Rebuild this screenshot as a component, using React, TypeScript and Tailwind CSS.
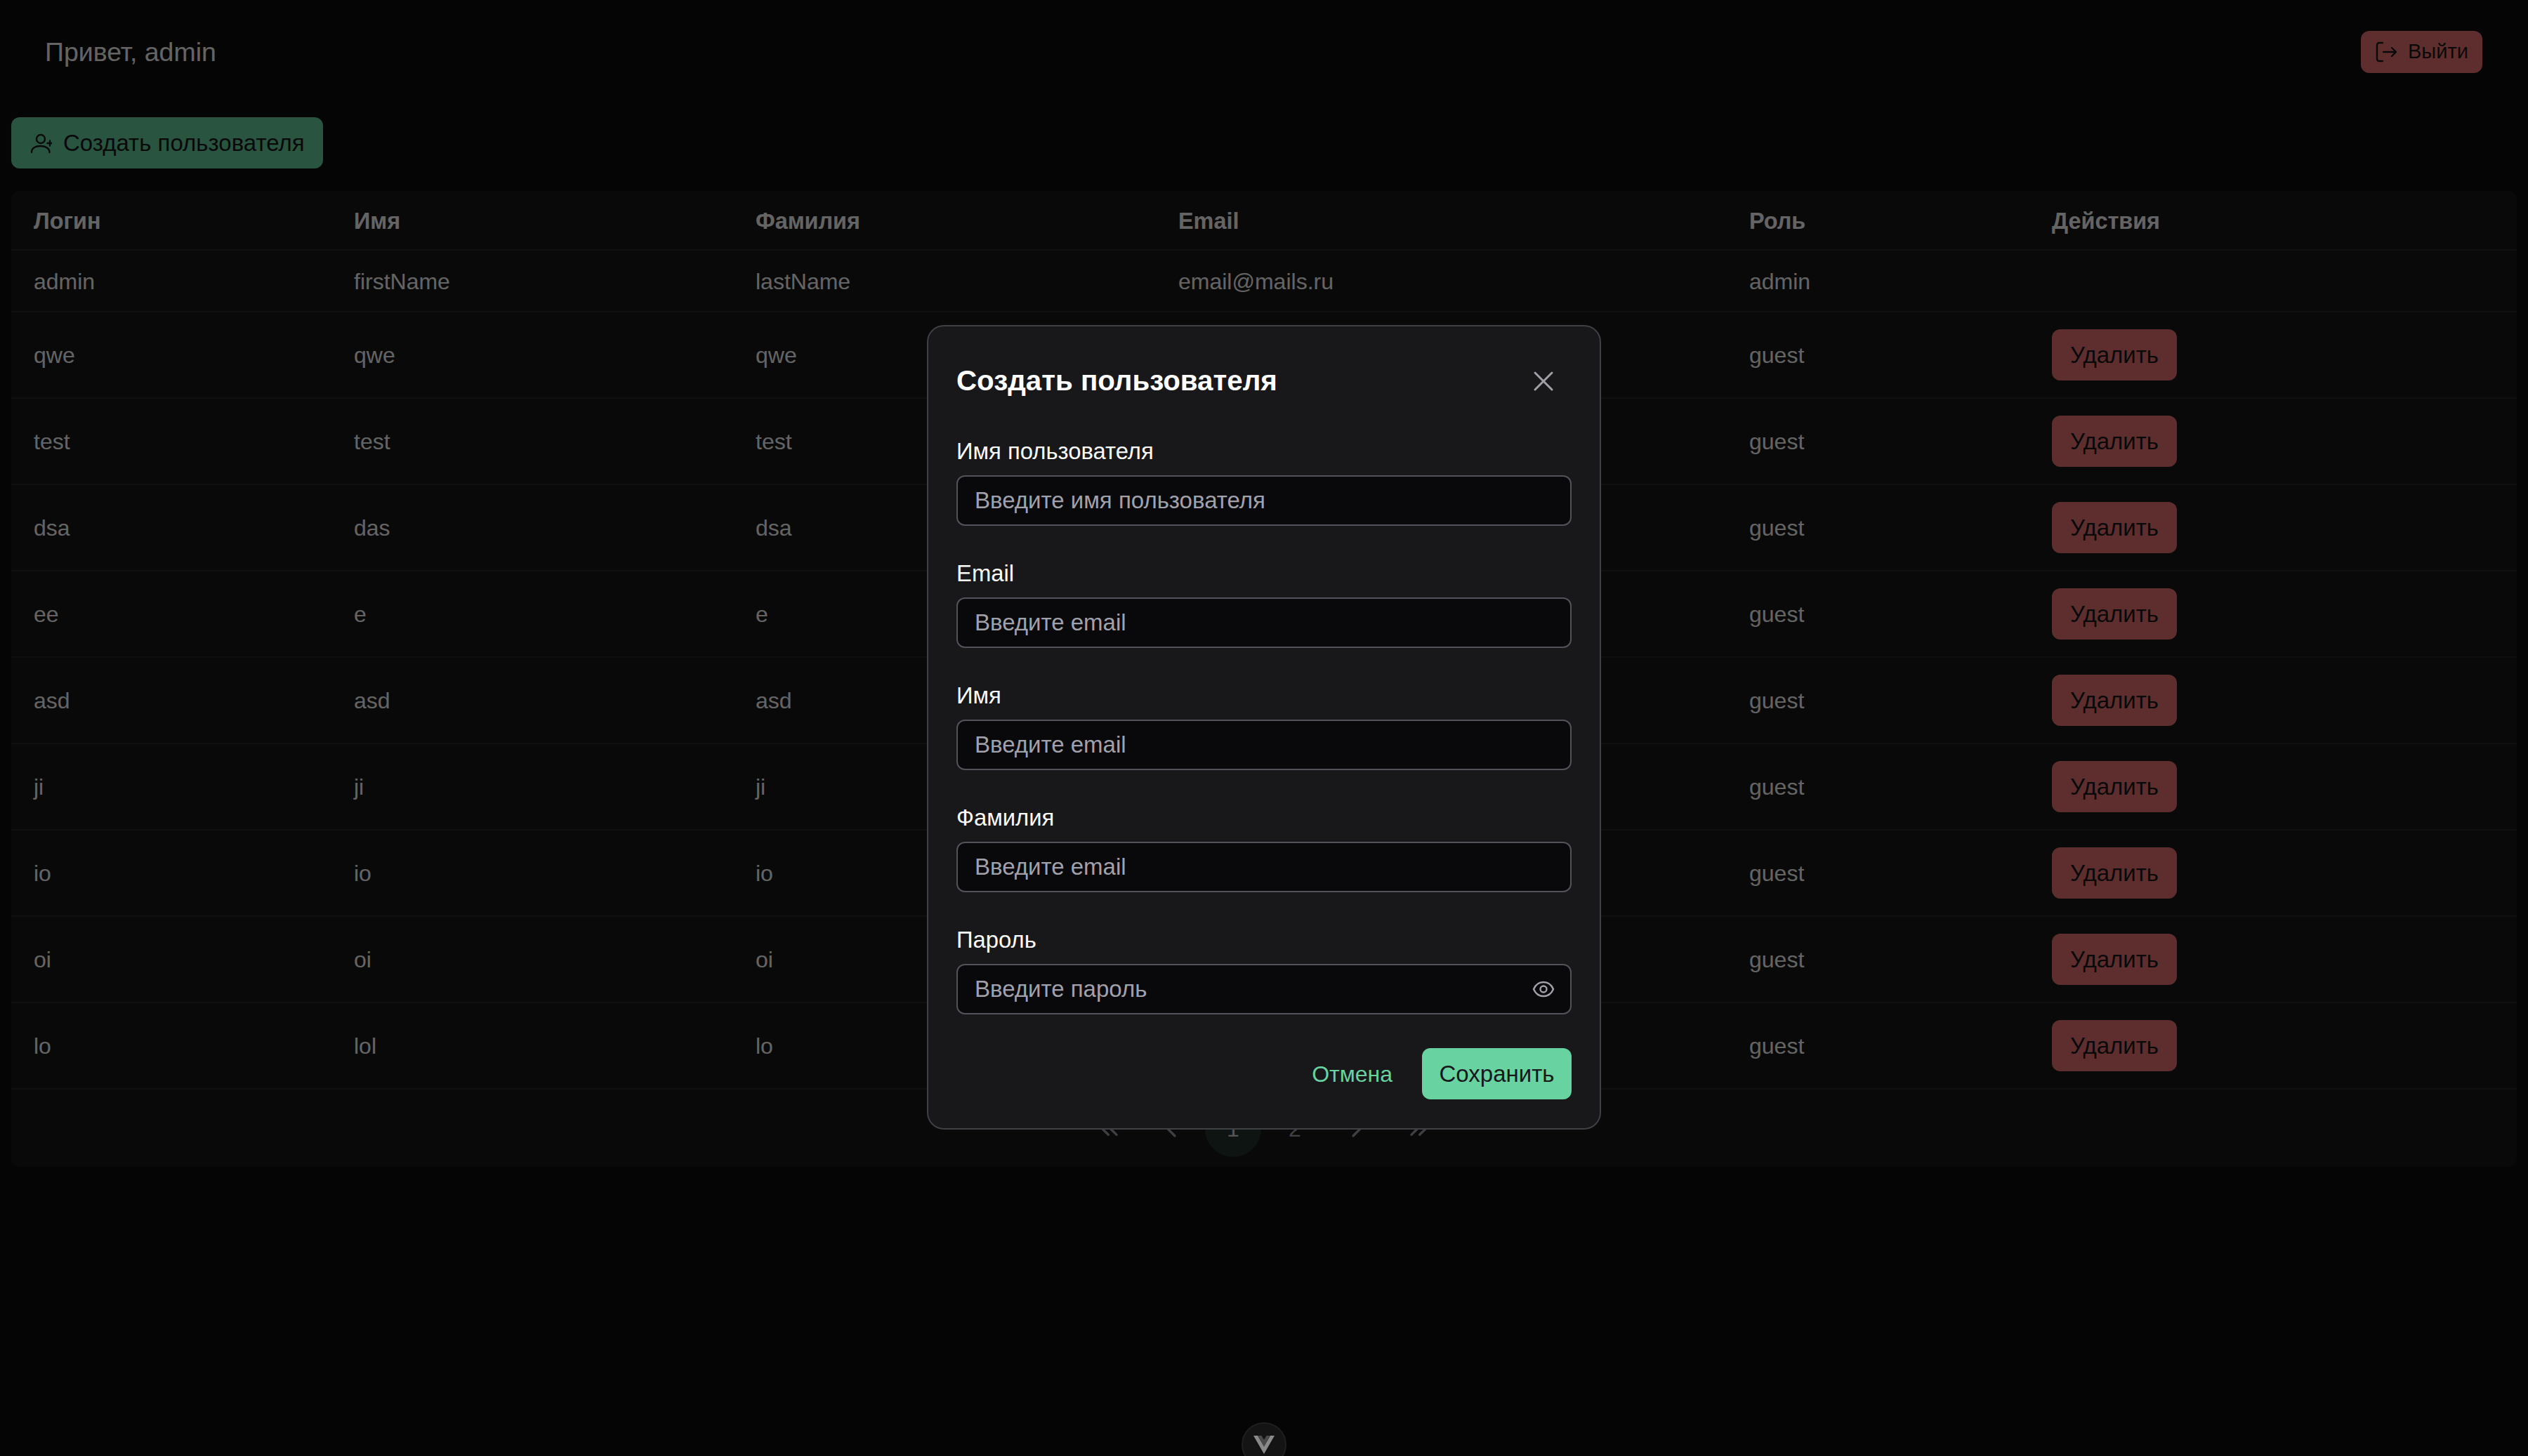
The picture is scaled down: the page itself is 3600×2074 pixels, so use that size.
import React from "react";
import { X, ChevronsLeft, ChevronLeft, ChevronRight, ChevronsRight } from "lucide-react";

const rows = [
  ["qwe", "qwe", "qwe", "qwe@qwe.ru"],
  ["test", "test", "test", "test@test.ru"],
  ["dsa", "das", "dsa", "dsa@dsa.ru"],
  ["ee", "e", "e", "e@e.ru"],
  ["asd", "asd", "asd", "asd@asd.ru"],
  ["ji", "ji", "ji", "ji@ji.ru"],
  ["io", "io", "io", "io@io.ru"],
  ["oi", "oi", "oi", "oi@oi.ru"],
  ["lo", "lol", "lo", "lo@lo.ru"],
];

const cols = "grid grid-cols-[456px_572px_602px_813px_431px_1fr] px-8 items-center";

function UserPlus() {
  return (
    <svg width="32" height="32" viewBox="0 0 32 32" fill="none" stroke="currentColor" strokeWidth="2.4" strokeLinecap="round">
      <circle cx="16" cy="10" r="6" />
      <path d="M3 29c0-6 5.5-9 12.5-9s13 3 13 9" />
      <path d="M29 12.5v7M25.5 16h7" />
    </svg>
  );
}

function Logout() {
  return (
    <svg width="32" height="32" viewBox="0 0 32 32" fill="none" stroke="currentColor" strokeWidth="2.4" strokeLinecap="round" strokeLinejoin="round">
      <path d="M11 3H6a3 3 0 0 0-3 3v20a3 3 0 0 0 3 3h5" />
      <path d="M12 16h18M24 10l6 6-6 6" />
    </svg>
  );
}

function EyeIcon() {
  return (
    <svg width="32" height="32" viewBox="0 0 32 32" fill="none" stroke="#a1a1aa" strokeWidth="2.4" strokeLinejoin="round">
      <path d="M2 16c3-7 8-10 14-10s11 3 14 10c-3 7-8 10-14 10s-11-3-14-10z" />
      <circle cx="16" cy="16" r="4.5" />
    </svg>
  );
}

function Field({ label, placeholder, eye }: { label: string; placeholder: string; eye?: boolean }) {
  return (
    <div className="flex flex-col">
      <label className="text-[32.8px] leading-[48px] h-[48px] mb-[10px] text-[#fafafa]">{label}</label>
      <div className="h-[72px] rounded-[12px] border-2 border-[#52525b] bg-[#09090b] flex items-center justify-between pl-6 pr-[22px]">
        <span className="text-[33px] text-[#a1a1aa]">{placeholder}</span>
        {eye && <EyeIcon />}
      </div>
    </div>
  );
}

export default function App() {
  const pager = [
    <ChevronsLeft key="a" size={40} strokeWidth={2} />,
    <ChevronLeft key="b" size={40} strokeWidth={2} />,
    "1",
    "2",
    <ChevronRight key="c" size={40} strokeWidth={2} />,
    <ChevronsRight key="d" size={40} strokeWidth={2} />,
  ];
  return (
    <div className="relative h-[2074px] w-[3600px] overflow-hidden bg-[#0d0d0f] font-['Liberation_Sans',sans-serif] text-[#fafafa]">
      <header className="h-[148px] flex items-center justify-between pl-16 pr-[65px]">
        <span className="text-[37.5px]">Привет, admin</span>
        <button className="h-[60px] w-[173px] rounded-[12px] bg-[#ec7474] text-[#18181b] text-[29px] flex items-center pl-5 gap-[15px]">
          <Logout />
          Выйти
        </button>
      </header>
      <div className="px-4">
        <button className="h-[73px] w-[444px] mt-[19px] rounded-[12px] bg-[#68d2a0] text-[#18181b] text-[33px] flex items-center pl-[26px] gap-[16px]">
          <UserPlus />
          Создать пользователя
        </button>
        <div className="mt-8 bg-[#18181b] rounded-[12px] h-[1390px]">
          <div className={`${cols} h-[85px] pt-[3px] border-b-2 border-[#27272a] font-bold text-[32.4px]`}>
            {["Логин", "Имя", "Фамилия", "Email", "Роль", "Действия"].map((h) => (
              <div key={h}>{h}</div>
            ))}
          </div>
          <div className={`${cols} h-[88px] pt-[1px] border-b-2 border-[#27272a] text-[32px]`}>
            <div>admin</div>
            <div>firstName</div>
            <div>lastName</div>
            <div>email@mails.ru</div>
            <div>admin</div>
            <div />
          </div>
          {rows.map((r) => (
            <div key={r[0]} className={`${cols} h-[123px] border-b-2 border-[#27272a] text-[32px]`}>
              <div>{r[0]}</div>
              <div>{r[1]}</div>
              <div>{r[2]}</div>
              <div>{r[3]}</div>
              <div>guest</div>
              <div>
                <button className="h-[73px] w-[178px] rounded-[12px] bg-[#ec7474] text-[#18181b] text-[33px]">Удалить</button>
              </div>
            </div>
          ))}
          <div className="flex justify-center gap-2 pt-4 text-[32px] text-[#a1a1aa]">
            {pager.map((p, i) => (
              <div key={i} className={`w-20 h-20 rounded-full flex items-center justify-center ${i === 2 ? "bg-[#24332d] text-[#d4d4d8]" : ""}`}>
                {p}
              </div>
            ))}
          </div>
        </div>
      </div>

      <div className="absolute inset-0 bg-black/60 flex items-center justify-center pb-[2px]">
        <div className="w-[960px] h-[1146px] rounded-[24px] border-2 border-[#3f3f46] bg-[#18181b] px-10 pt-[36px]">
          <div className="flex items-center justify-between h-[84px]">
            <h2 className="text-[40.3px] font-bold text-white">Создать пользователя</h2>
            <X className="text-[#a1a1aa] mr-4" size={48} strokeWidth={1.5} />
          </div>
          <div className="mt-[34px] flex flex-col gap-[44px]">
            <Field label="Имя пользователя" placeholder="Введите имя пользователя" />
            <Field label="Email" placeholder="Введите email" />
            <Field label="Имя" placeholder="Введите email" />
            <Field label="Фамилия" placeholder="Введите email" />
            <Field label="Пароль" placeholder="Введите пароль" eye />
          </div>
          <div className="mt-[48px] flex justify-end items-center">
            <button className="text-[32px] text-[#68d2a0] mr-[42px]">Отмена</button>
            <button className="h-[73px] w-[213px] rounded-[12px] bg-[#68d2a0] text-[#18181b] text-[33px]">Сохранить</button>
          </div>
        </div>
      </div>

      <div className="absolute left-[1768px] top-[2026px] w-16 h-16 rounded-full bg-[#141414] border-2 border-[#1f1f1f] flex items-center justify-center">
        <svg width="30" height="26" viewBox="0 0 30 26">
          <path d="M0 0h6l9 15.5L24 0h6L15 26z" fill="#8a8a8a" />
          <path d="M6 0h5.5l3.5 6 3.5-6H24l-9 15.5z" fill="#4a4a4a" />
        </svg>
      </div>
    </div>
  );
}
